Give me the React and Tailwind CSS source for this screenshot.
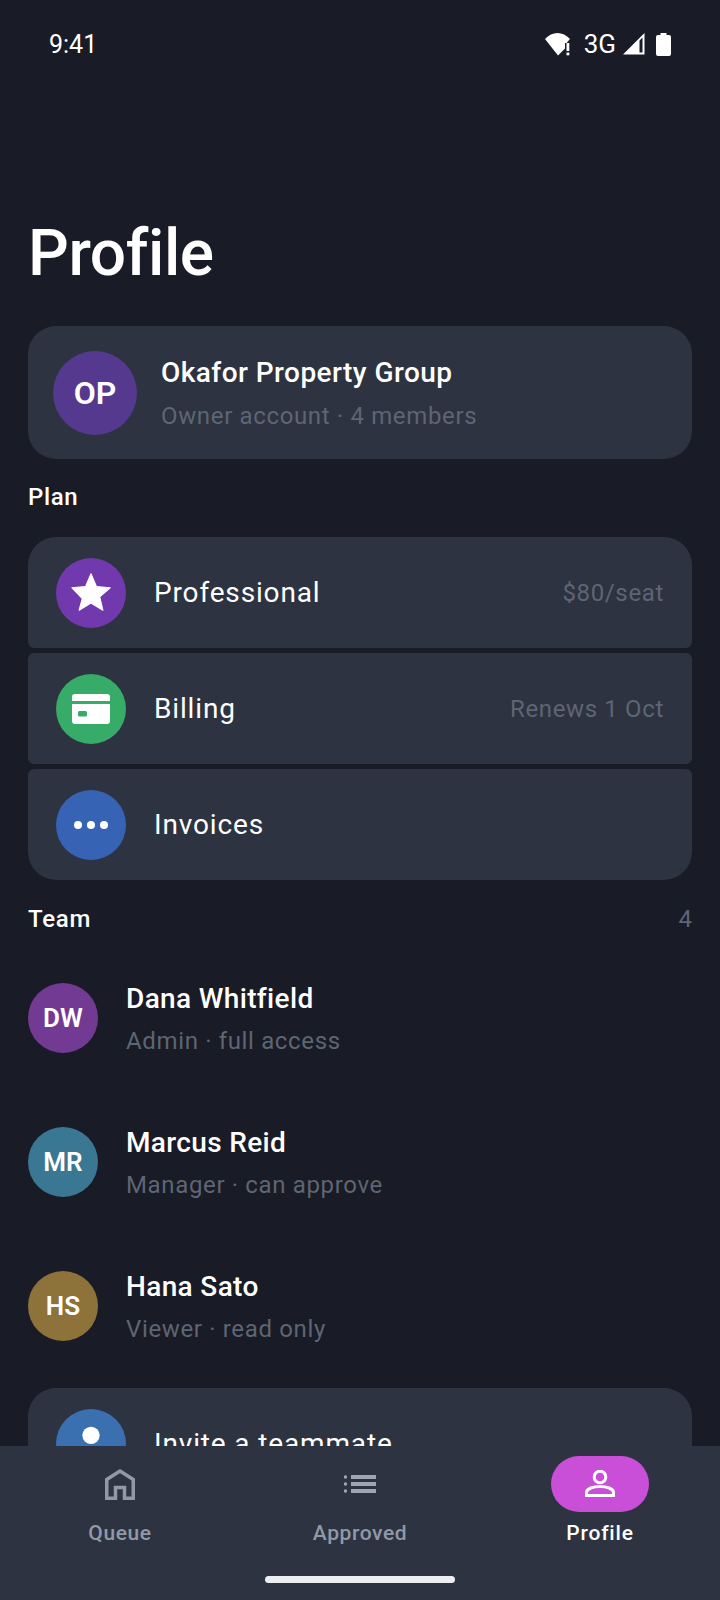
import React from "react";

const plan = [
  { label: "Professional", value: "$80/seat", color: "bg-[#7239ae]", icon: "star", shape: "rounded-t-[28px] rounded-b-[6px]" },
  { label: "Billing", value: "Renews 1 Oct", color: "bg-[#37ab68]", icon: "card", shape: "rounded-[6px]" },
  { label: "Invoices", color: "bg-[#3763b5]", icon: "dots", shape: "rounded-t-[6px] rounded-b-[28px]" },
];

const team = [
  { initials: "DW", name: "Dana Whitfield", role: "Admin · full access", color: "bg-[#733a94]" },
  { initials: "MR", name: "Marcus Reid", role: "Manager · can approve", color: "bg-[#3a7792]" },
  { initials: "HS", name: "Hana Sato", role: "Viewer · read only", color: "bg-[#8d7239]" },
];

const RowIcon = ({ type }) => {
  if (type === "star") {
    return (
      <svg width="46" height="46" viewBox="0 0 24 24" fill="white" stroke="white" strokeWidth="0.6" strokeLinejoin="round">
        <path d="M12 17.27L18.18 21l-1.64-7.03L22 9.24l-7.19-.61L12 2 9.19 8.63 2 9.24l5.46 5.73L5.82 21z" />
      </svg>
    );
  }
  if (type === "card") {
    return (
      <svg width="48" height="48" viewBox="0 0 48 48">
        <path fill="white" d="M8 9h32a3 3 0 0 1 3 3v4H5v-4a3 3 0 0 1 3-3zM5 19h38v17a3 3 0 0 1-3 3H8a3 3 0 0 1-3-3z" />
        <rect x="11" y="26" width="9" height="5.500" rx="1.500" fill="#37ab68" />
      </svg>
    );
  }
  if (type === "dots") {
    return (
      <svg width="48" height="48" viewBox="0 0 48 48" fill="white">
        <circle cx="11" cy="24" r="4" />
        <circle cx="24" cy="24" r="4" />
        <circle cx="37" cy="24" r="4" />
      </svg>
    );
  }
  return (
    <svg width="52" height="52" viewBox="0 0 24 24" fill="white">
      <circle cx="12" cy="8" r="4" />
      <path d="M12 14c-3.300 0-8 1.700-8 5v1h16v-1c0-3.300-4.700-5-8-5z" />
    </svg>
  );
};

const StatusBar = () => (
  <div className="flex h-[88px] items-center justify-between pl-[49px] pr-[49px] text-white">
    <span className="pt-[2px] text-[25px]">9:41</span>
    <div className="flex items-center">
      <svg width="27" height="23" viewBox="0 0 27 23" fill="white">
        <path d="M0 6C3.500 2 8 0 12.500 0S21.500 2 25 6L21.500 10H20v5.500L13 22.500z" />
        <rect x="21.500" y="10" width="2.800" height="8" />
        <rect x="21.500" y="19.500" width="2.800" height="2.800" />
      </svg>
      <span className="ml-[12px] text-[26px] leading-none">3G</span>
      <svg className="ml-[7px]" width="22" height="22" viewBox="0 0 22 22" fill="white">
        <path fillRule="evenodd" d="M0 21.500L21.500 0v21.500zM16.500 7.500L19.500 4.500v15h-3z" />
      </svg>
      <svg className="ml-[11px]" width="15" height="23" viewBox="0 0 15 23" fill="white">
        <path d="M4.500 0h6v2h2.500a2 2 0 0 1 2 2v17a2 2 0 0 1-2 2H2a2 2 0 0 1-2-2V4a2 2 0 0 1 2-2h2.500z" />
      </svg>
    </div>
  </div>
);

const NavBar = () => (
  <nav className="absolute bottom-0 left-0 h-[154px] w-full bg-[#2d3340]">
    <div className="grid grid-cols-3 pt-[10px]">
      <div className="flex flex-col items-center">
        <div className="flex h-[56px] w-[98px] items-center justify-center">
          <svg width="30" height="31" viewBox="0 0 30 31" fill="none" stroke="#9299a6" strokeWidth="3.500">
            <path d="M1.750 29.250V10.500L15 2l13.250 8.500v18.750h-8.750V18.500h-9v10.750z" />
          </svg>
        </div>
        <span className="mt-[7px] text-[21px] font-medium leading-[28px] tracking-[0.6px] text-[#9299a6]">Queue</span>
      </div>
      <div className="flex flex-col items-center">
        <div className="flex h-[56px] w-[98px] items-center justify-center">
          <svg width="32" height="18" viewBox="0 0 32 18" fill="#9fa5b1">
            <circle cx="1.500" cy="2" r="1.700" />
            <circle cx="1.500" cy="9" r="1.700" />
            <circle cx="1.500" cy="16" r="1.700" />
            <rect x="7" y="0" width="25" height="4" />
            <rect x="7" y="7" width="25" height="4" />
            <rect x="7" y="14" width="25" height="4" />
          </svg>
        </div>
        <span className="mt-[7px] text-[21px] font-medium leading-[28px] tracking-[0.6px] text-[#9299a6]">Approved</span>
      </div>
      <div className="flex flex-col items-center">
        <div className="flex h-[56px] w-[98px] items-center justify-center rounded-full bg-[#c94fd8]">
          <svg width="30" height="28" viewBox="0 0 30 28" fill="none" stroke="white" strokeWidth="3">
            <circle cx="15" cy="7" r="5.800" />
            <path d="M1.500 25.500v-3c0-4 7-6 13.500-6s13.500 2 13.500 6v3z" />
          </svg>
        </div>
        <span className="mt-[7px] text-[21px] font-medium leading-[28px] tracking-[0.8px] text-white">Profile</span>
      </div>
    </div>
    <div className="absolute bottom-[17px] left-[265px] h-[7px] w-[190px] rounded-full bg-[#eceef1]" />
  </nav>
);

export default function App() {
  return (
    <div className="relative h-[1600px] w-[720px] overflow-hidden bg-[#191b26] font-['Roboto',sans-serif]">
      <StatusBar />
      <main className="px-[28px]">
        <h1 className="mt-[128px] text-[64px] font-medium leading-[76px] tracking-[-0.4px] text-white [font-variant-ligatures:common-ligatures]">Profile</h1>

        <section className="mt-[34px] flex h-[133px] items-center gap-[24px] rounded-[28px] bg-[#2d3340] pl-[25px]">
          <div className="flex h-[84px] w-[84px] items-center justify-center rounded-full bg-[#54398f] text-[32px] font-semibold text-white">OP</div>
          <div className="pt-[2px]">
            <div className="text-[28px] font-medium leading-[36px] tracking-[0.45px] text-white">Okafor Property Group</div>
            <div className="mt-[9px] text-[24px] leading-[32px] tracking-[0.65px] text-[#5e6573]">Owner account · 4 members</div>
          </div>
        </section>

        <h2 className="mt-[22px] text-[24px] font-medium leading-[32px] tracking-[0.6px] text-white">Plan</h2>

        <section className="mt-[24px] flex flex-col gap-[5px]">
          {plan.map((row) => (
            <div key={row.label} className={`flex h-[111px] items-center bg-[#2d3340] px-[28px] ${row.shape}`}>
              <div className={`flex h-[70px] w-[70px] items-center justify-center rounded-full ${row.color}`}>
                <RowIcon type={row.icon} />
              </div>
              <span className="ml-[28px] text-[28px] leading-[36px] tracking-[0.85px] text-white">{row.label}</span>
              {row.value && <span className="ml-auto text-[24px] tracking-[0.65px] text-[#5e6573]">{row.value}</span>}
            </div>
          ))}
        </section>

        <div className="mt-[21px] flex items-center justify-between">
          <h2 className="text-[24px] font-medium leading-[32px] tracking-[0.7px] text-white">Team</h2>
          <span className="text-[24px] text-[#5e6573]">4</span>
        </div>

        <section className="mt-[9px] flex flex-col">
          {team.map((m) => (
            <div key={m.initials} className="flex h-[144px] items-center gap-[28px]">
              <div className={`flex h-[70px] w-[70px] items-center justify-center rounded-full text-[26px] font-semibold text-white ${m.color}`}>{m.initials}</div>
              <div className="pt-[2px]">
                <div className="text-[28px] font-medium leading-[36px] tracking-[0.35px] text-white [font-variant-ligatures:common-ligatures]">{m.name}</div>
                <div className="mt-[8px] text-[24px] leading-[32px] tracking-[0.65px] text-[#5e6573]">{m.role}</div>
              </div>
            </div>
          ))}
        </section>

        <section className="mt-[10px] flex h-[112px] items-center rounded-t-[28px] bg-[#2d3340] pl-[28px]">
          <div className="flex h-[70px] w-[70px] items-center justify-center rounded-full bg-[#3a70b0]">
            <RowIcon type="person" />
          </div>
          <span className="ml-[28px] text-[28px] leading-[36px] tracking-[0.85px] text-white">Invite a teammate</span>
        </section>
      </main>
      <NavBar />
    </div>
  );
}
